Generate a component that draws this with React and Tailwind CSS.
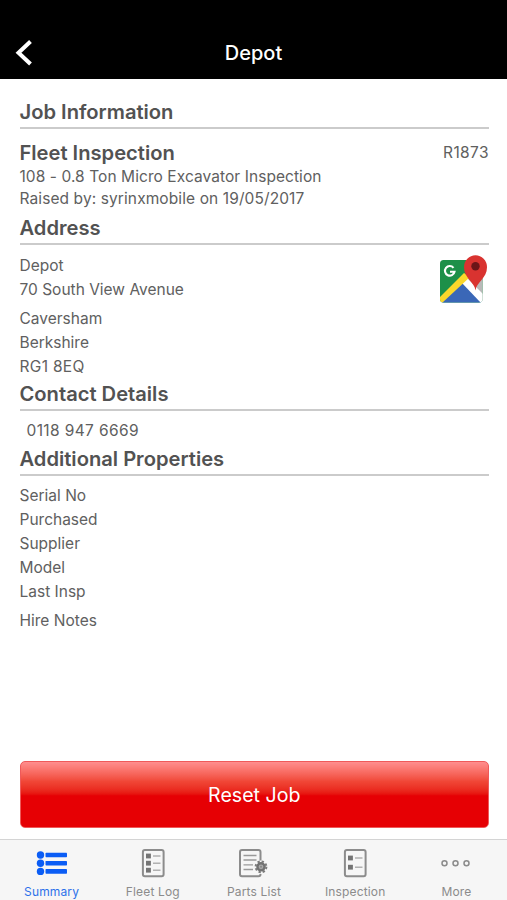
import React from "react";

function SectionTitle({ children, className = "" }) {
  return (
    <div className={`shrink-0 border-b-2 border-[#cbcbcb] pb-[3px] ${className}`}>
      <h2 className="h-[25px] text-[20.15px] leading-[25px] font-semibold text-[#525252]">{children}</h2>
    </div>
  );
}

function Row({ children, className = "" }) {
  return <div className={`h-6 shrink-0 leading-6 ${className}`}>{children}</div>;
}

function MapsIcon() {
  return (
    <svg className="-mt-px" width="50" height="52" viewBox="0 0 50 52">
      <defs>
        <clipPath id="tile">
          <rect x="1" y="7" width="42.500" height="42.500" rx="3.500" />
        </clipPath>
      </defs>
      <g clipPath="url(#tile)">
        <rect x="1" y="7" width="43" height="43" fill="#1d9049" />
        <path d="M44 7V50L23 29L40 10Z" fill="#b9b9b9" />
        <path d="M22 28L2 50H44Z" fill="#3a67b7" />
        <path d="M22 29L27 24L44 41V50H42Z" fill="#fff" />
        <path d="M25 20L1 44V50H3L31 24Z" fill="#fbd72b" />
      </g>
      <path d="M36.500 37.500C35.800 29 25 25.500 25 14.200A11.500 12 0 0 1 48 14.200C48 25.500 37.200 29 36.500 37.500Z" fill="#d93330" />
      <circle cx="36.500" cy="13.200" r="4.200" fill="#6b1518" />
      <path d="M14.500 14.800A4.800 4.800 0 1 0 15.500 18.800H11" fill="none" stroke="#fff" strokeWidth="2.100" />
    </svg>
  );
}

function SummaryIcon() {
  return (
    <svg width="32" height="30" viewBox="0 0 32 30" fill="#0b5df5">
      {[7, 15.2, 23.4].map((y) => (
        <g key={y}>
          <circle cx="4.500" cy={y} r="3.700" />
          <rect x="9.500" y={y - 2.3} width="21.500" height="4.600" rx="0.700" />
        </g>
      ))}
    </svg>
  );
}

function ChecklistIcon({ rows }) {
  return (
    <svg width="32" height="30" viewBox="0 0 32 30" fill="none">
      <rect x="5.900" y="2" width="20.700" height="26.200" rx="2" stroke="#8c8c8c" strokeWidth="2" />
      {rows.map((y) => (
        <g key={y}>
          <rect x="9" y={y - 2.4} width="4.900" height="4.800" fill="#747474" />
          <path d={`M16 ${y}H23.500`} stroke="#a5a5a5" strokeWidth="1.300" />
        </g>
      ))}
    </svg>
  );
}

function PartsIcon() {
  return (
    <svg width="32" height="30" viewBox="0 0 32 30" fill="none">
      <path d="M22.500 12.500V4Q22.500 2 20.500 2H4Q2 2 2 4V26.200Q2 28.200 4 28.200H20.500Q22.500 28.200 22.500 26" stroke="#8c8c8c" strokeWidth="2" />
      <path d="M5.500 7.500H18.500M5.500 12H18.500M5.500 16.800H15M5.500 21.500H15" stroke="#9a9a9a" strokeWidth="1.300" />
      <circle cx="23" cy="18.800" r="5.400" stroke="#7c7c7c" strokeWidth="2" strokeDasharray="2.300 1.941" />
      <circle cx="23" cy="18.800" r="3.600" fill="#a8a8a8" stroke="#727272" strokeWidth="2.400" />
      <circle cx="23" cy="18.800" r="1" fill="#858585" />
    </svg>
  );
}

function MoreIcon() {
  return (
    <svg width="32" height="30" viewBox="0 0 32 30" fill="none" stroke="#8b8b8b" strokeWidth="1.500">
      <circle cx="4.500" cy="15.200" r="2.500" />
      <circle cx="15.500" cy="15.200" r="2.500" />
      <circle cx="26.500" cy="15.200" r="2.500" />
    </svg>
  );
}

const tabs = [
  { label: "Summary", icon: <SummaryIcon />, active: true },
  { label: "Fleet Log", icon: <ChecklistIcon rows={[8, 15.2, 22.2]} /> },
  { label: "Parts List", icon: <PartsIcon /> },
  { label: "Inspection", icon: <ChecklistIcon rows={[10, 19.2]} /> },
  { label: "More", icon: <MoreIcon /> },
];

export default function App() {
  return (
    <div className="flex h-[900px] w-[507px] flex-col overflow-hidden bg-white font-['Inter','Liberation_Sans',sans-serif] text-[15.5px] text-[#606060]">
      <header className="grid h-[79px] shrink-0 grid-cols-[1fr_auto_1fr] items-center bg-black px-[15px] pt-[26px] text-white">
        <button aria-label="Back" className="justify-self-start">
          <svg width="20" height="28" viewBox="0 0 20 28" fill="none" stroke="white" strokeWidth="4">
            <path d="M15.500 2.500L3.500 13.800L15.500 25" />
          </svg>
        </button>
        <h1 className="text-[20px] leading-6 font-medium">Depot</h1>
      </header>

      <main className="flex flex-1 flex-col pt-5 pr-[18px] pl-[19.5px]">
        <SectionTitle>Job Information</SectionTitle>
        <div className="mt-[11px] flex h-[25px] shrink-0 items-center justify-between">
          <h3 className="text-[20.15px] leading-[25px] font-semibold text-[#525252]">Fleet Inspection</h3>
          <span className="tracking-[0.4px]">R1873</span>
        </div>
        <div className="h-[23px] shrink-0 leading-[23px] tracking-[0.07px]">108 - 0.8 Ton Micro Excavator Inspection</div>
        <div className="h-[21px] shrink-0 leading-[21px] tracking-[0.1px]">Raised by: syrinxmobile on 19/05/2017</div>

        <SectionTitle className="mt-[6px]">Address</SectionTitle>
        <div className="mt-[9px] flex h-[125px] shrink-0 justify-between">
          <div>
            <Row>Depot</Row>
            <Row>70 South View Avenue</Row>
            <Row className="mt-[5px]">Caversham</Row>
            <Row>Berkshire</Row>
            <Row className="tracking-[0.3px]">RG1 8EQ</Row>
          </div>
          <MapsIcon />
        </div>

        <SectionTitle className="mt-[2px]">Contact Details</SectionTitle>
        <Row className="mt-2 pl-[7px] tracking-[0.38px]">0118 947 6669</Row>

        <SectionTitle className="mt-[3px]">Additional Properties</SectionTitle>
        <Row className="mt-2">Serial No</Row>
        <Row>Purchased</Row>
        <Row>Supplier</Row>
        <Row>Model</Row>
        <Row>Last Insp</Row>
        <Row className="mt-[5px]">Hire Notes</Row>

        <button className="mt-auto mb-[11px] h-[67px] shrink-0 rounded-[5px] border border-[#ef5a5a] bg-linear-to-b from-[#ff8e8e] via-[#f04636] via-30% to-[#e60004] to-52% pt-[2px] text-[19.6px] text-white">
          Reset Job
        </button>
      </main>

      <nav className="grid h-[61px] shrink-0 grid-cols-5 border-t border-[#d4d4d4] bg-[#f6f6f6] pl-px">
        {tabs.map((tab) => (
          <button
            key={tab.label}
            className={`flex flex-col items-center pt-2 text-[12px] tracking-[0.15px] ${tab.active ? "text-[#2e72ea]" : "text-[#8b8b8b]"}`}
          >
            {tab.icon}
            <span className="mt-[6px] leading-4">{tab.label}</span>
          </button>
        ))}
      </nav>
    </div>
  );
}
